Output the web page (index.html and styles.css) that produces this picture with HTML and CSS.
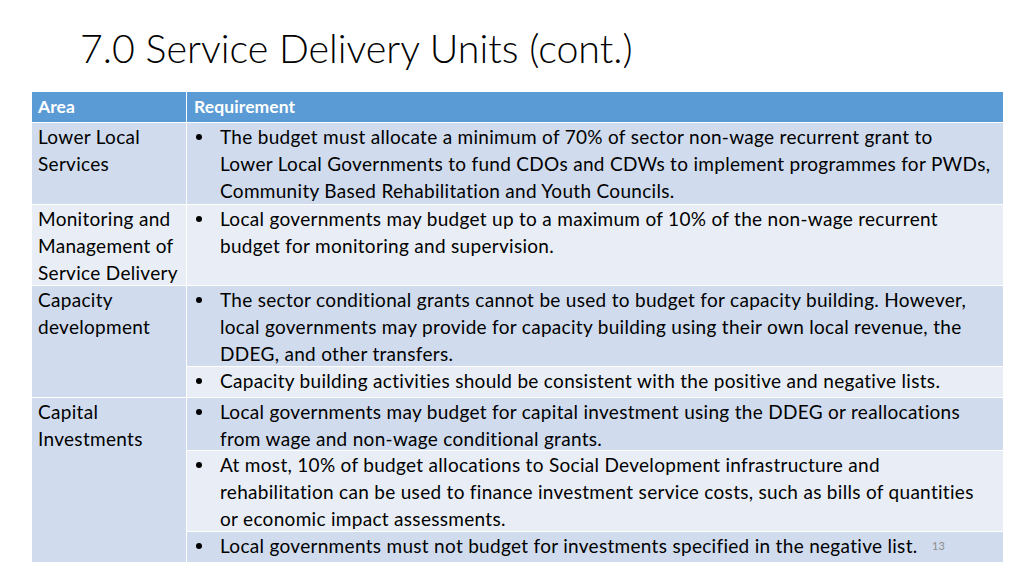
FILE: index.html
```html
<!DOCTYPE html>
<html>
<head>
<meta charset="utf-8">
<link rel="stylesheet" href="styles.css">
</head>
<body>
<div class="slide">
  <h1 class="title">7.0 Service Delivery Units (cont.)</h1>
  <div class="table">
    <div class="cell head">Area</div>
    <div class="cell head">Requirement</div>

    <div class="cell area dark r1">Lower Local<br>Services</div>
    <div class="cell req dark"><span class="dot"></span><span class="txt">The budget must allocate a minimum of 70% of sector non-wage recurrent grant to<br>Lower Local Governments to fund CDOs and CDWs to implement programmes for PWDs,<br>Community Based Rehabilitation and Youth Councils.</span></div>

    <div class="cell area light">Monitoring and<br>Management of<br>Service Delivery</div>
    <div class="cell req light"><span class="dot"></span><span class="txt">Local governments may budget up to a maximum of 10% of the non-wage recurrent<br>budget for monitoring and supervision.</span></div>

    <div class="cell area dark span2">Capacity<br>development</div>
    <div class="cell req dark"><span class="dot"></span><span class="txt">The sector conditional grants cannot be used to budget for capacity building. However,<br>local governments may provide for capacity building using their own local revenue, the<br>DDEG, and other transfers.</span></div>
    <div class="cell req light"><span class="dot"></span><span class="txt">Capacity building activities should be consistent with the positive and negative lists.</span></div>

    <div class="cell area dark span3">Capital<br>Investments</div>
    <div class="cell req dark"><span class="dot"></span><span class="txt">Local governments may budget for capital investment using the DDEG or reallocations<br>from wage and non-wage conditional grants.</span></div>
    <div class="cell req light"><span class="dot"></span><span class="txt">At most, 10% of budget allocations to Social Development infrastructure and<br>rehabilitation can be used to finance investment service costs, such as bills of quantities<br>or economic impact assessments.</span></div>
    <div class="cell req dark"><span class="dot"></span><span class="txt">Local governments must not budget for investments specified in the negative list.</span><span class="pagenum">13</span></div>
  </div>
</div>
</body>
</html>
```
FILE: styles.css
```css
html, body {
  margin: 0;
  padding: 0;
  background: #ffffff;
}
.slide {
  width: 1024px;
  height: 576px;
  position: relative;
  overflow: hidden;
  font-family: "Lato", "Carlito", "Liberation Sans", sans-serif;
  color: #000;
}
.title {
  margin: 0;
  padding: 23px 0 0 80px;
  height: 68px;
  box-sizing: border-box;
  font-weight: 300;
  font-size: 39.4px;
  line-height: 50px;
  letter-spacing: 0;
}
.table {
  margin: 24px 0 0 32px;
  width: 971px;
  display: grid;
  grid-template-columns: 154px 1fr;
  grid-template-rows: 30px 81px 80px 80px 30px 52px 80px 30px;
  gap: 1px;
  background: #ffffff;
  font-size: 19px;
  line-height: 27px;
  letter-spacing: 0.3px;
}
.cell {
  white-space: nowrap;
}
.head {
  background: #5b9bd5;
  color: #ffffff;
  font-weight: 700;
  font-size: 17.5px;
  line-height: 30px;
  letter-spacing: 0.1px;
  padding-left: 6px;
}
.head + .head {
  padding-left: 7px;
}
.area {
  padding-left: 6px;
}
.span2 { grid-row: span 2; }
.span3 { grid-row: span 3; }
.dark { background: #d0dcee; }
.light { background: #e9eef6; }
.req {
  display: flex;
  align-items: flex-start;
  position: relative;
}
.dot {
  flex: none;
  width: 6px;
  height: 6px;
  border-radius: 50%;
  background: #000;
  margin: 11px 18px 0 9px;
}
.txt {
  display: block;
}
.pagenum {
  position: absolute;
  left: 745px;
  top: 7px;
  font-size: 11px;
  line-height: 14px;
  color: #8c8c8c;
  letter-spacing: 0;
}
```
